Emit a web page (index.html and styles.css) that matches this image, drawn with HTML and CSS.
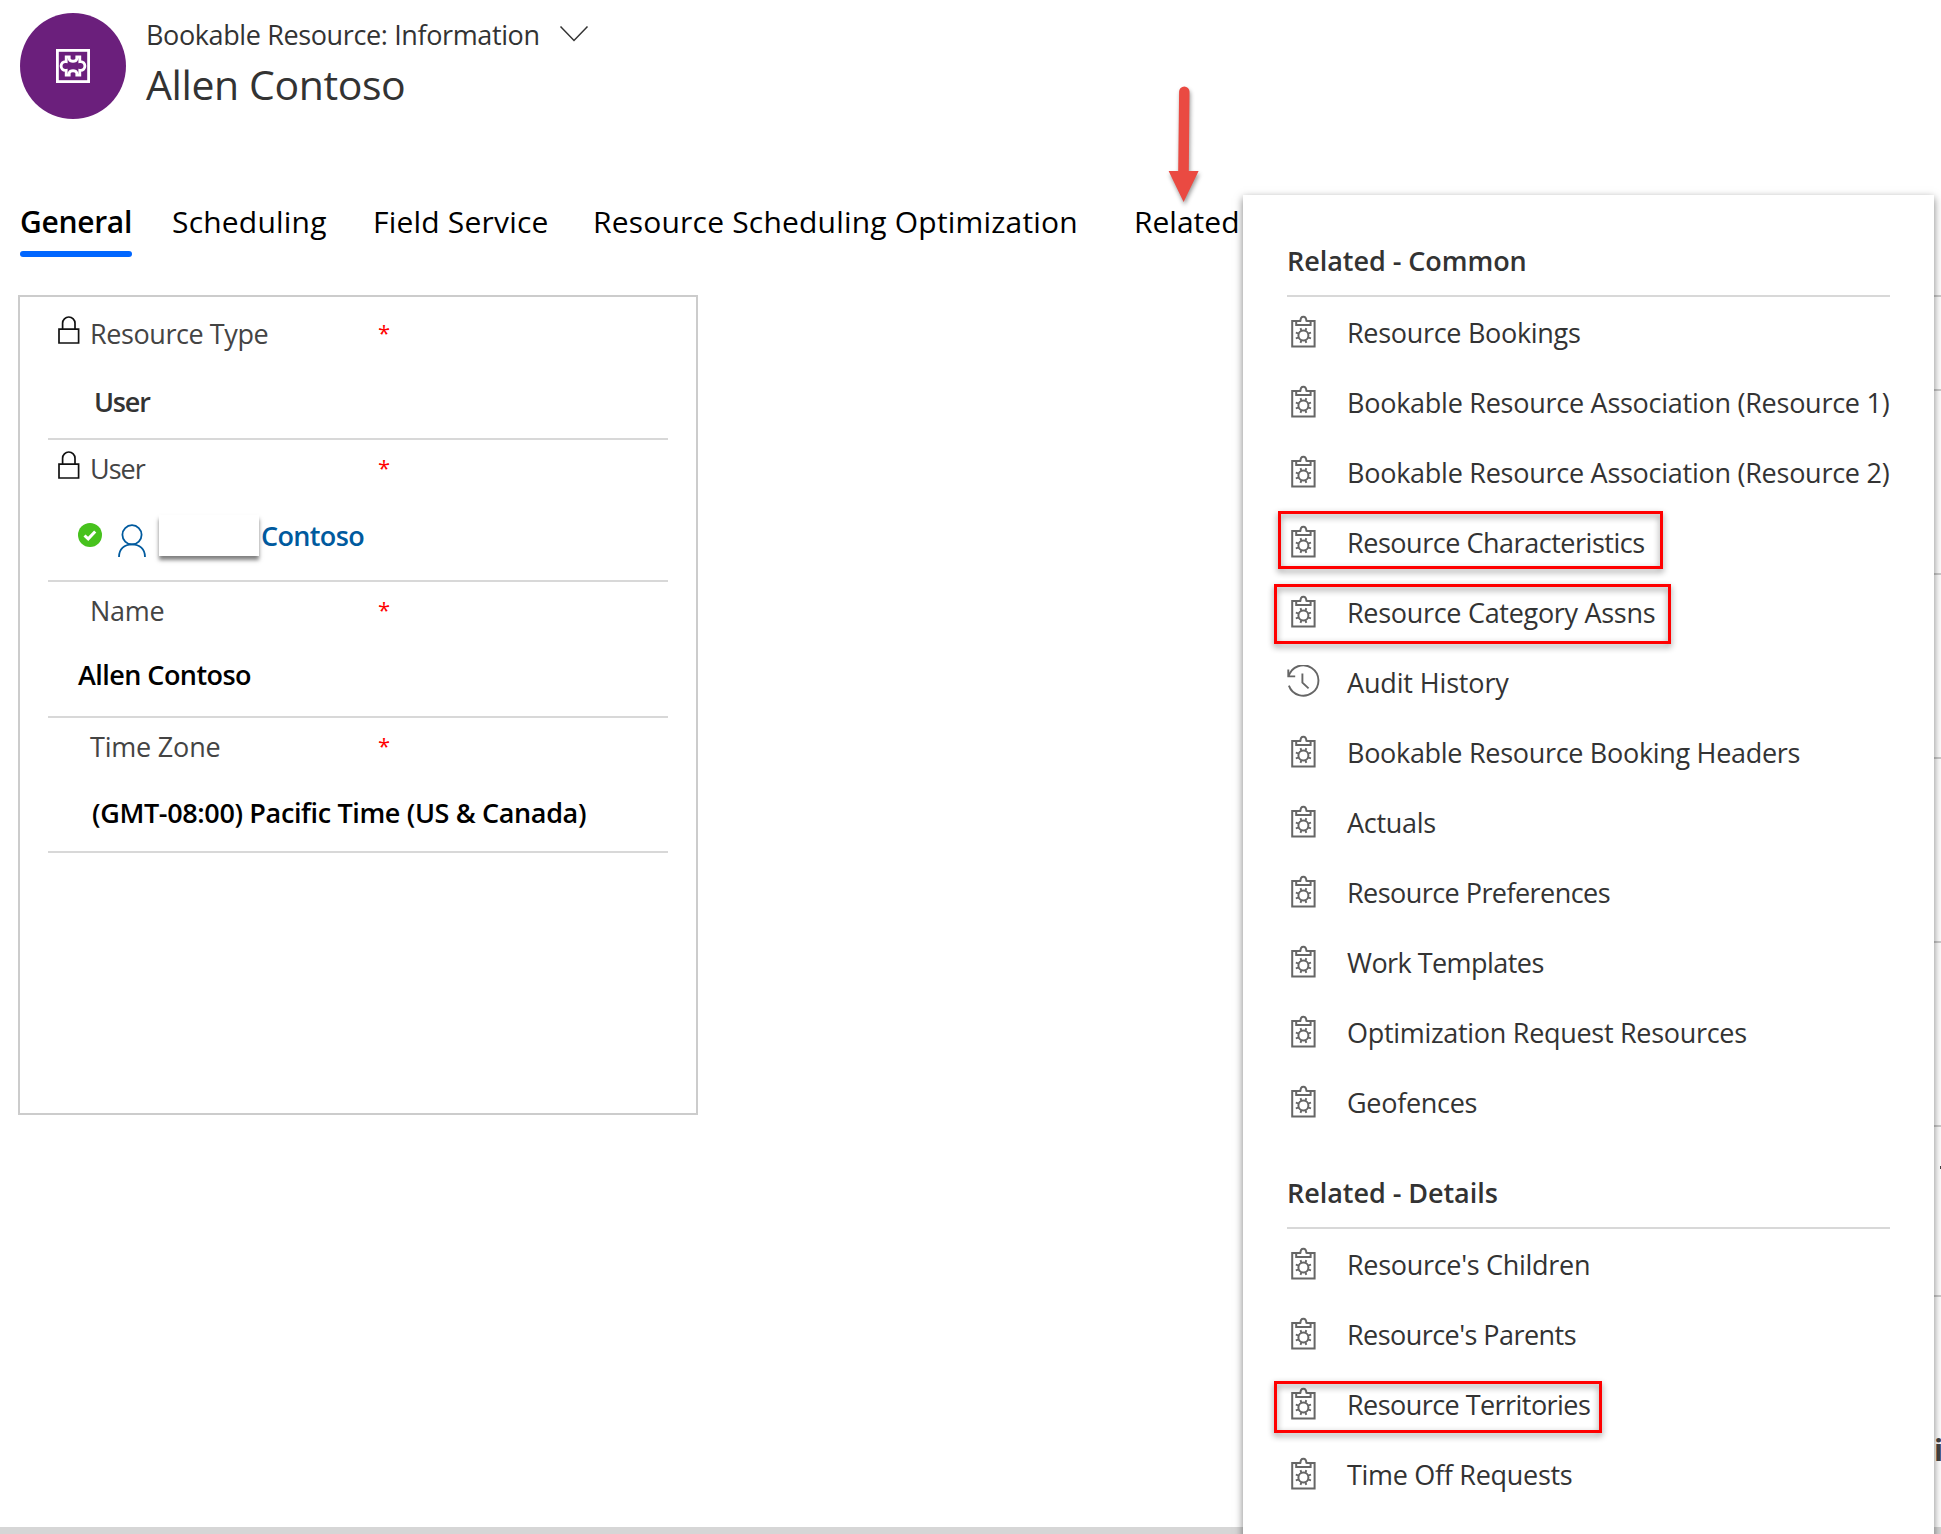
FILE: index.html
```
<!DOCTYPE html>
<html lang="en">
<head>
<meta charset="utf-8">
<title>Bookable Resource: Allen Contoso</title>
<link rel="stylesheet" href="styles.css">
</head>
<body>
<svg class="defs" width="0" height="0" aria-hidden="true">
  <symbol id="clipboard" viewBox="0 0 34 34">
    <g fill="none" stroke="#666" stroke-width="2">
      <path d="M14 6H5.2V31.4H27.6V6H19.2"/>
      <path d="M9.2 6V10H23.6V6M13.4 6.4C13.4 3 14.4 1.8 16.4 1.8S19.4 3 19.4 6.4"/>
      <circle cx="16.4" cy="20.5" r="5"/>
      <path stroke-width="1.9" d="M14.5 16.1l-1-3M18.3 16.1l1-3M20.8 18.6l3.2-.9M20.8 22.4l3.2.9M18.3 24.9l1 3M14.5 24.9l-1 3M12 22.4l-3.2.9M12 18.6l-3.2-.9"/>
    </g>
  </symbol>
  <symbol id="history" viewBox="0 0 34 34">
    <g fill="none" stroke="#666" stroke-width="1.9">
      <path d="M1.6 11.4A15.2 15.2 0 1 1 1.9 20.6"/>
      <path d="M1.3 4.6V11.4H8.2M15.4 8.4V17.6L21.6 23.4"/>
    </g>
  </symbol>
  <symbol id="lock" viewBox="0 0 22 28">
    <path d="M1 13.2H20.6V27H1zM4.6 13V7.2a6.1 6.1 0 0 1 12.4 0V13" fill="none" stroke="#111" stroke-width="1.7"/>
  </symbol>
</svg>

<header class="header">
  <div class="avatar">
    <svg width="34" height="34" viewBox="0 0 34 34" fill="none" stroke="#fff" stroke-width="2.8">
      <rect x="1.4" y="1.4" width="31.2" height="31.2"/>
      <path d="M10.2 7.9H13.2V10C14.2 13 19.8 13 20.8 10V7.9H23.8V12.6C30.6 11.6 30.6 22.4 23.8 21.4V26.1H20.8V24C19.8 21 14.2 21 13.2 24V26.1H10.2V21.4C3.4 22.4 3.4 11.6 10.2 12.6z"/>
    </svg>
  </div>
  <div class="titles">
    <div class="form-name"><span>Bookable Resource: Information</span>
      <svg width="30" height="18" viewBox="0 0 30 18"><path d="M1.5 1.5L15 15.5L28.5 1.5" fill="none" stroke="#333" stroke-width="1.5"/></svg>
    </div>
    <h1 class="record-name">Allen Contoso</h1>
  </div>
</header>

<nav class="tabs">
  <span class="tab tab-active">General</span>
  <span class="tab">Scheduling</span>
  <span class="tab">Field Service</span>
  <span class="tab">Resource Scheduling Optimization</span>
  <span class="tab tab-related">Related</span>
</nav>

<main class="main">
  <section class="card">
    <div class="field">
      <div class="label"><svg class="lock" width="22" height="28"><use href="#lock"/></svg><span class="name name-type">Resource Type</span><span class="required">*</span></div>
      <div class="value value-type">User</div>
    </div>
    <div class="field field-user">
      <div class="label"><svg class="lock" width="22" height="28"><use href="#lock"/></svg><span class="name name-user">User</span><span class="required">*</span></div>
      <div class="value value-user">
        <svg class="check" width="24" height="24" viewBox="0 0 24 24"><circle cx="12" cy="12" r="12" fill="#47c21d"/><path d="M6.5 12.5l3.7 3.4 7-7.4" fill="none" stroke="#fff" stroke-width="3"/></svg>
        <svg class="person" width="28" height="33" viewBox="0 0 28 33" fill="none" stroke="#005a9e" stroke-width="1.8"><circle cx="14" cy="10.8" r="9.6"/><path d="M1 33C1 25 6.4 20.4 14 20.4S27 25 27 33"/></svg>
        <span class="redacted"></span>
        <a class="link">Contoso</a>
      </div>
    </div>
    <div class="field field-name">
      <div class="label"><span></span><span class="name">Name</span><span class="required">*</span></div>
      <div class="value value-name">Allen Contoso</div>
    </div>
    <div class="field field-zone">
      <div class="label"><span></span><span class="name name-zone">Time Zone</span><span class="required">*</span></div>
      <div class="value value-zone">(GMT-08:00) Pacific Time (US &amp; Canada)</div>
    </div>
  </section>
  <section class="side">
    <div class="side-row side-head"></div>
    <div class="side-row"></div>
    <div class="side-row"></div>
    <div class="side-row"></div>
    <div class="side-row"></div>
    <div class="side-row side-short"><span class="speck"></span></div>
    <div class="side-foot">i</div>
  </section>
</main>
<footer class="footer"></footer>

<svg class="arrow" width="40" height="122" viewBox="0 0 40 122"><path d="M19.1 8.6a5.2 5.2 0 0 1 10.4 0L28.8 88H38.6L23.6 119 8.6 88H18.2z" fill="#ea4a42"/></svg>

<aside class="menu">
  <h2 class="menu-title">Related - Common</h2>
  <ul class="menu-list">
    <li class="item"><svg class="icon"><use href="#clipboard"/></svg>Resource Bookings</li>
    <li class="item loose"><svg class="icon"><use href="#clipboard"/></svg>Bookable Resource Association (Resource 1)</li>
    <li class="item loose"><svg class="icon"><use href="#clipboard"/></svg>Bookable Resource Association (Resource 2)</li>
    <li class="item tight"><svg class="icon"><use href="#clipboard"/></svg>Resource Characteristics<span class="mark mark-characteristics"></span></li>
    <li class="item"><svg class="icon"><use href="#clipboard"/></svg>Resource Category Assns<span class="mark mark-category"></span></li>
    <li class="item looser"><svg class="icon"><use href="#history"/></svg>Audit History</li>
    <li class="item"><svg class="icon"><use href="#clipboard"/></svg>Bookable Resource Booking Headers</li>
    <li class="item"><svg class="icon"><use href="#clipboard"/></svg>Actuals</li>
    <li class="item tighter"><svg class="icon"><use href="#clipboard"/></svg>Resource Preferences</li>
    <li class="item tighter"><svg class="icon"><use href="#clipboard"/></svg>Work Templates</li>
    <li class="item"><svg class="icon"><use href="#clipboard"/></svg>Optimization Request Resources</li>
    <li class="item"><svg class="icon"><use href="#clipboard"/></svg>Geofences</li>
  </ul>
  <h2 class="menu-title">Related - Details</h2>
  <ul class="menu-list">
    <li class="item"><svg class="icon"><use href="#clipboard"/></svg>Resource's Children</li>
    <li class="item tighter"><svg class="icon"><use href="#clipboard"/></svg>Resource's Parents</li>
    <li class="item tighter"><svg class="icon"><use href="#clipboard"/></svg>Resource Territories<span class="mark mark-territories"></span></li>
    <li class="item"><svg class="icon"><use href="#clipboard"/></svg>Time Off Requests</li>
  </ul>
</aside>
</body>
</html>
```
FILE: styles.css
```
* { box-sizing: border-box; }
body {
  margin: 0;
  position: relative;
  height: 1534px;
  overflow: hidden;
  display: flex;
  flex-direction: column;
  background: #fff;
  color: #333;
  font: 27px/40px "Open Sans", sans-serif;
  letter-spacing: -0.3px;
  white-space: nowrap;
}
svg { flex: none; display: block; }
.defs { position: absolute; }
h1, h2, ul { margin: 0; padding: 0; font-weight: 400; list-style: none; }

.header { display: flex; gap: 20px; height: 201px; padding: 13px 0 0 20px; }
.avatar {
  display: grid;
  place-items: center;
  width: 106px;
  height: 106px;
  border-radius: 50%;
  background: #6b1f7c;
}
.titles { padding-top: 1px; }
.form-name { display: flex; align-items: center; gap: 19px; height: 41px; letter-spacing: -0.38px; }
.form-name svg { margin-top: -1px; }
.record-name { font-size: 41px; line-height: 58px; letter-spacing: -0.4px; }

.tabs {
  display: grid;
  grid-template-columns: 152px 201px 220px 541px auto;
  height: 94px;
  padding-left: 20px;
  color: #000;
  font-size: 30px;
  line-height: 42px;
  letter-spacing: 0.2px;
}
.tab { height: 56px; }
.tab-active {
  position: relative;
  width: 112px;
  font-weight: 600;
  letter-spacing: -0.3px;
}
.tab-active::after {
  content: "";
  position: absolute;
  left: 0;
  bottom: 0;
  width: 112px;
  height: 6px;
  border-radius: 3px;
  background: #06f;
}
.tab-related { letter-spacing: 0; }

.main { display: flex; justify-content: space-between; height: 1232px; padding-left: 18px; }
.card {
  width: 680px;
  height: 820px;
  padding: 8px 28px 0;
  border: 2px solid #ccc;
}
.field {
  display: flex;
  flex-direction: column;
  justify-content: space-between;
  height: 135px;
  padding: 9px 0 16px;
  border-bottom: 2px solid #d8d8d8;
}
.field-user { height: 142px; padding-bottom: 24px; }
.field-name { height: 136px; padding-bottom: 21px; }
.field-zone { padding-bottom: 18px; }
.label {
  display: grid;
  grid-template-columns: 42px 288px auto;
  color: #444;
}
.lock { margin: 2px 0 0 10px; }
.name-type { letter-spacing: -0.42px; }
.name-user { letter-spacing: -1px; }
.name-zone { letter-spacing: -0.2px; }
.required { color: #f00; font-size: 22px; line-height: 36px; }
.value { color: #000; font-weight: 600; letter-spacing: -0.45px; }
.value-type { padding-left: 46px; color: #333; letter-spacing: -1.2px; }
.value-user { display: flex; height: 40px; padding-left: 30px; color: #005a9e; }
.value-name { padding-left: 30px; letter-spacing: -0.55px; }
.value-zone { padding-left: 44px; letter-spacing: -0.36px; }
.check { margin-top: 7px; }
.person { margin: 8px 13px 0 16px; }
.redacted {
  width: 100px;
  height: 41px;
  margin-top: -1px;
  background: #fff;
  box-shadow: 0 4px 4px rgba(0, 0, 0, 0.5);
}
.link { padding-left: 2px; letter-spacing: -0.65px; }

.side { width: 680px; border-top: 2px solid #ccc; }
.side-row { height: 184px; border-bottom: 2px solid #ccc; }
.side-head { height: 94px; }
.side-short { display: flex; justify-content: flex-end; height: 170px; padding-top: 39px; }
.speck { width: 1px; height: 3px; background: #444; }
.side-foot { padding: 133px 0 0 673px; color: #444; font-size: 30px; font-weight: 700; }
.footer { height: 7px; background: #d6d6d6; }

.arrow {
  position: absolute;
  left: 1160px;
  top: 83px;
  filter: drop-shadow(1px 3px 2px rgba(0, 0, 0, 0.4));
}

.menu {
  position: absolute;
  left: 1243px;
  top: 195px;
  width: 691px;
  height: 1400px;
  padding: 30px 44px 0;
  background: #fff;
  box-shadow: 0 3px 8px rgba(0, 0, 0, 0.5);
}
.menu-title {
  height: 72px;
  border-bottom: 2px solid #d8d8d8;
  font-size: 27px;
  line-height: 72px;
  font-weight: 600;
  letter-spacing: -0.05px;
}
.menu-list { padding-bottom: 20px; }
.item {
  position: relative;
  display: flex;
  align-items: center;
  gap: 26px;
  height: 70px;
  line-height: 42px;
  padding-top: 1px;
}
.looser { letter-spacing: -0.15px; }
.loose { letter-spacing: -0.26px; }
.tight { letter-spacing: -0.47px; }
.tighter { letter-spacing: -0.55px; }
.icon { width: 34px; height: 34px; margin-top: -1px; }
.mark {
  position: absolute;
  border: 3px solid #f00;
  filter: drop-shadow(0 3px 3px rgba(0, 0, 0, 0.45));
}
.mark-characteristics { left: -9px; top: 4px; width: 385px; height: 58px; }
.mark-category { left: -13px; top: 7px; width: 397px; height: 60px; }
.mark-territories { left: -13px; top: 12px; width: 328px; height: 52px; }
```
